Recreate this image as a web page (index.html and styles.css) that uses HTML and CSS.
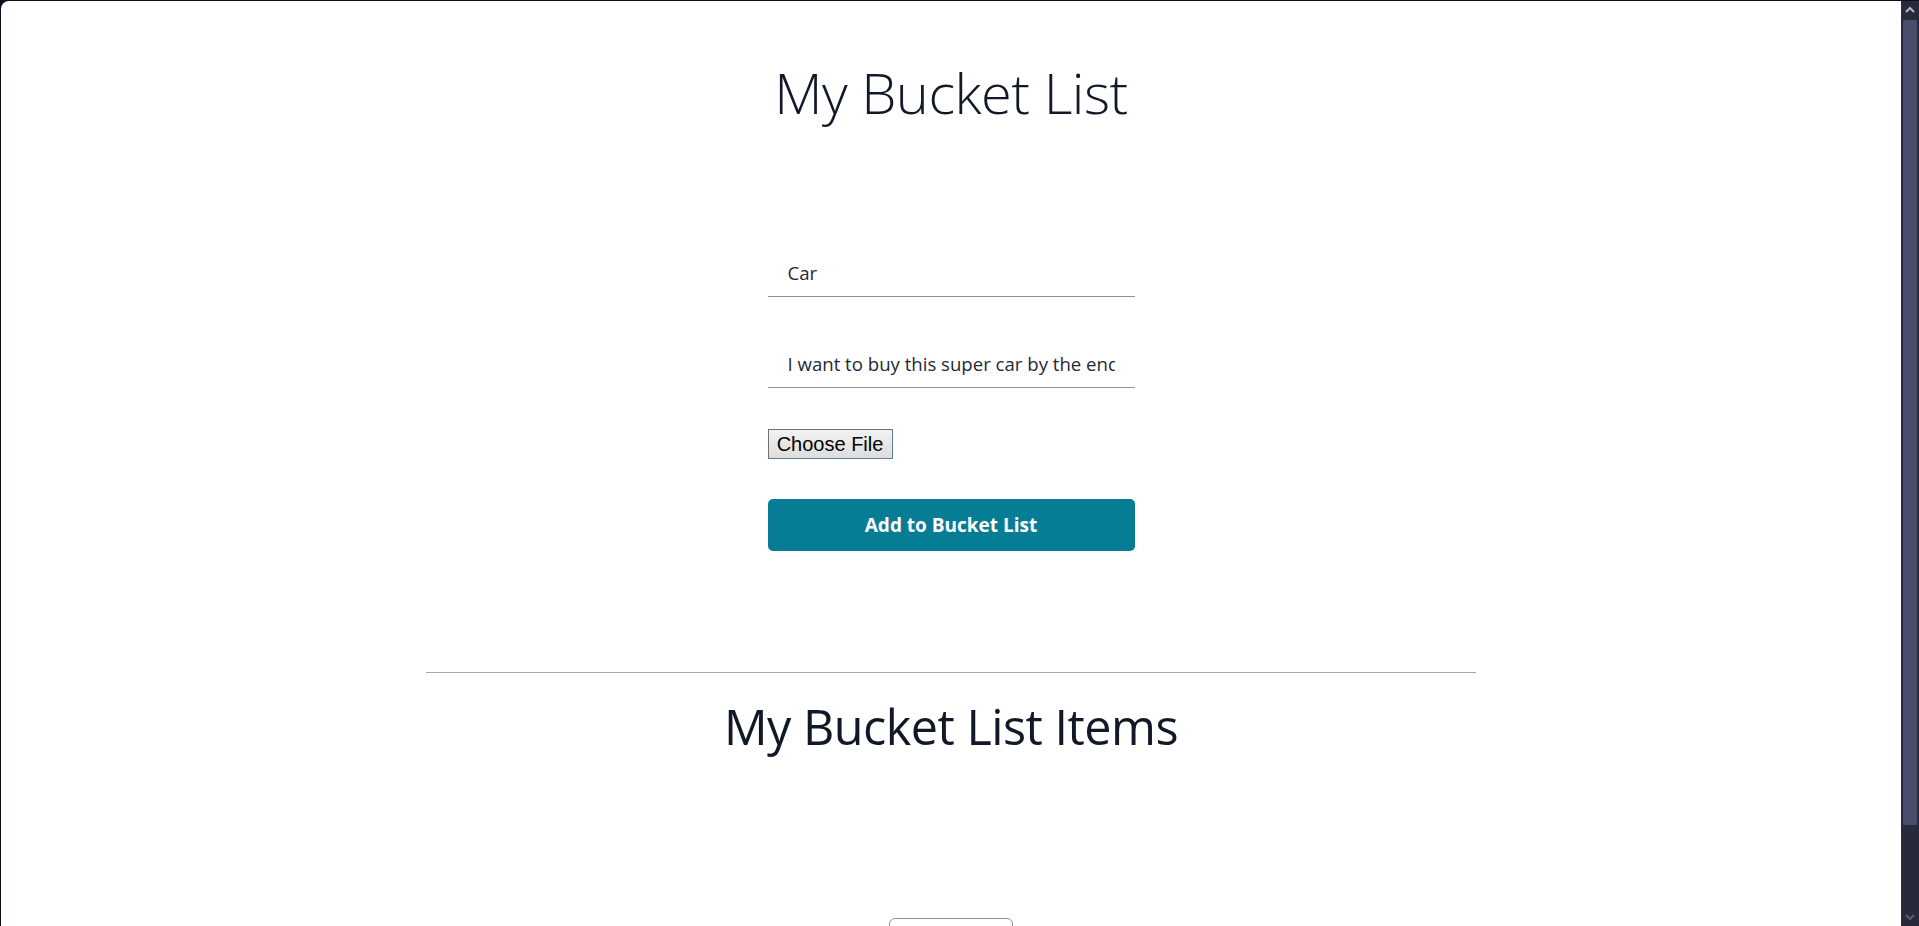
FILE: index.html
```html
<!DOCTYPE html>
<html lang="en">
<head>
<meta charset="utf-8">
<title>My Bucket List</title>
<link rel="stylesheet" href="styles.css">
</head>
<body>
<div class="window">
  <main class="page">
    <h1 class="title">My Bucket List</h1>
    <form class="form">
      <input class="field field-name" type="text" value="Car">
      <input class="field field-desc" type="text" value="I want to buy this super car by the end of the year">
      <div class="file-row"><button type="button" class="file-btn">Choose File</button></div>
      <button type="button" class="add-btn">Add to Bucket List</button>
    </form>
    <hr class="divider">
    <h2 class="items-title">My Bucket List Items</h2>
    <div class="item-box"></div>
  </main>
  <div class="scrollbar">
    <div class="arrow arrow-up">
      <svg width="10" height="8" viewBox="0 0 10 8"><path d="M1 6 L5 2 L9 6" fill="none" stroke="#b4b8c6" stroke-width="2"/></svg>
    </div>
    <div class="thumb-track"><div class="thumb"></div></div>
    <div class="arrow arrow-down">
      <svg width="10" height="8" viewBox="0 0 10 8"><path d="M1 2 L5 6 L9 2" fill="none" stroke="#5c6074" stroke-width="2"/></svg>
    </div>
  </div>
</div>
</body>
</html>
```

FILE: styles.css
```css
html, body {
  margin: 0;
  padding: 0;
  height: 926px;
  overflow: hidden;
  background: #0b0f1d;
}

.window {
  display: flex;
  height: 926px;
  margin-left: 1px;
  margin-top: 1px;
  background: #ffffff;
  border-top-left-radius: 8px;
  overflow: hidden;
}

.page {
  flex: 1;
  display: flex;
  flex-direction: column;
  align-items: center;
  font-family: "Open Sans", "Noto Sans", sans-serif;
  color: #111827;
}

.title {
  margin: 55px 0 0;
  font-size: 56px;
  font-weight: 300;
  line-height: 72px;
  letter-spacing: -0.5px;
}

.form {
  width: 367px;
  display: flex;
  flex-direction: column;
  margin-top: 121px;
}

.field {
  box-sizing: border-box;
  height: 48px;
  width: 100%;
  border: none;
  border-bottom: 1px solid #8a949e;
  padding: 0 20px;
  font-family: "Open Sans", "Noto Sans", sans-serif;
  font-size: 18.6px;
  color: #1f2937;
  background: transparent;
  outline: none;
}

.field-desc {
  margin-top: 43px;
}

.file-row {
  margin-top: 41px;
  display: flex;
}

.file-btn {
  box-sizing: border-box;
  height: 30px;
  width: 125px;
  padding: 0;
  font-family: "Liberation Sans", Arial, sans-serif;
  font-size: 20px;
  color: #000;
  background: linear-gradient(#f2f2f2, #dddddd);
  border: 1px solid #5b7d9e;
  border-left-color: #707070;
  border-top-color: #707070;
  border-radius: 0;
}

.add-btn {
  margin-top: 40px;
  height: 52px;
  width: 100%;
  border: none;
  border-radius: 5px;
  background: #077d95;
  color: #ffffff;
  font-family: "Open Sans", "Noto Sans", sans-serif;
  font-weight: 700;
  font-size: 19px;
}

.divider {
  width: 1050px;
  margin: 121px 0 0;
  border: none;
  border-top: 1.5px solid #a3a9b2;
  height: 0;
}

.items-title {
  margin: 24px 0 0;
  font-size: 48.5px;
  font-weight: 400;
  line-height: 58px;
  letter-spacing: -0.5px;
}

.item-box {
  margin-top: 163px;
  width: 124px;
  height: 40px;
  box-sizing: border-box;
  border: 1px solid #8a949e;
  border-radius: 6px;
  flex-shrink: 0;
}

.scrollbar {
  width: 18px;
  flex-shrink: 0;
  background: #262a3a;
  display: flex;
  flex-direction: column;
  height: 925px;
}

.arrow {
  height: 18px;
  display: flex;
  align-items: center;
  justify-content: center;
}

.thumb-track {
  flex: 1;
  padding: 1px 2px 0;
}

.thumb {
  height: 805px;
  background: #4a4e6c;
  border-radius: 1px;
}
```
